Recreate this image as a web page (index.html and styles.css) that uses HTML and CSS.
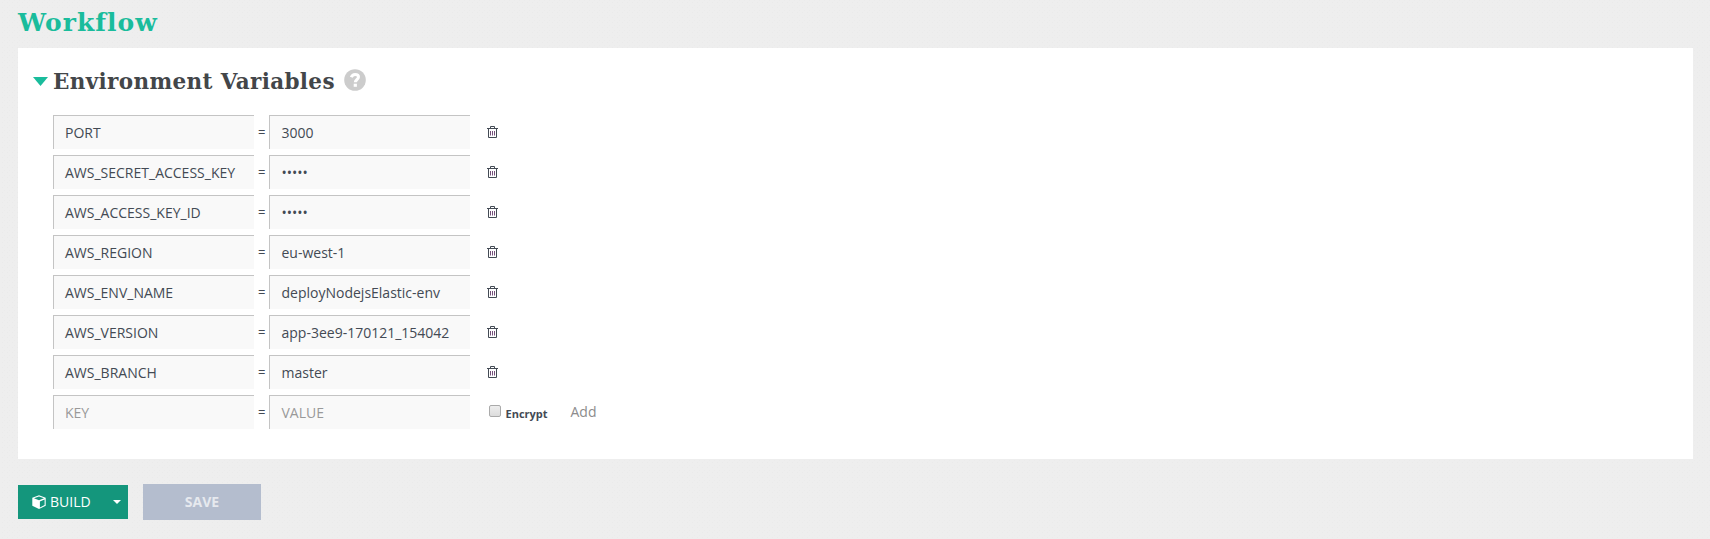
FILE: index.html
```html
<!DOCTYPE html>
<html lang="en">
<head>
<meta charset="utf-8">
<title>Workflow</title>
<link rel="stylesheet" href="styles.css">
</head>
<body>
<svg class="defs" width="0" height="0">
  <symbol id="trash" viewBox="0 0 11 12">
    <path d="M0 2.500h11M3.500 2V.5h4V2M1.500 3v8.500h8V3" fill="none" stroke="#434a54"/>
    <path d="M3.500 5v4.500M5.500 5v4.500M7.500 5v4.500" fill="none" stroke="#75507b"/>
  </symbol>
</svg>
<h1 class="title">Workflow</h1>
<main class="card">
  <h2 class="heading"><span class="toggle"></span><span class="heading-text">Environment Variables</span>
    <svg class="help" viewBox="0 0 22 22"><circle cx="11" cy="11" r="10.8" fill="#ccc"/><path d="M7.3 8.2C8 6.300 9.300 5.400 11.100 5.400C13.200 5.400 14.500 6.500 14.500 8.100C14.500 10.500 11.300 10.500 11.300 13.300" fill="none" stroke="#fff" stroke-width="3"/><path d="M9.700 14.700h3.200v3.100h-3.200z" fill="#fff"/></svg>
  </h2>
  <div class="rows">
    <div class="row"><div class="field">PORT</div><span class="eq">=</span><div class="field">3000</div><svg class="trash"><use href="#trash"/></svg></div>
    <div class="row"><div class="field">AWS_SECRET_ACCESS_KEY</div><span class="eq">=</span><div class="field">•••••</div><svg class="trash"><use href="#trash"/></svg></div>
    <div class="row"><div class="field">AWS_ACCESS_KEY_ID</div><span class="eq">=</span><div class="field">•••••</div><svg class="trash"><use href="#trash"/></svg></div>
    <div class="row"><div class="field">AWS_REGION</div><span class="eq">=</span><div class="field">eu-west-1</div><svg class="trash"><use href="#trash"/></svg></div>
    <div class="row"><div class="field">AWS_ENV_NAME</div><span class="eq">=</span><div class="field">deployNodejsElastic-env</div><svg class="trash"><use href="#trash"/></svg></div>
    <div class="row"><div class="field">AWS_VERSION</div><span class="eq">=</span><div class="field">app-3ee9-170121_154042</div><svg class="trash"><use href="#trash"/></svg></div>
    <div class="row"><div class="field">AWS_BRANCH</div><span class="eq">=</span><div class="field">master</div><svg class="trash"><use href="#trash"/></svg></div>
    <div class="row"><div class="field empty">KEY</div><span class="eq">=</span><div class="field empty">VALUE</div><span class="check"></span><span class="encrypt">Encrypt</span><span class="add">Add</span></div>
  </div>
</main>
<div class="actions">
  <div class="build">
    <svg class="cube" viewBox="0 0 14 14"><path d="M7 .2L13.700 2.700V10.800L7 13.900L.3 10.800V2.700z" fill="#fff"/><path d="M7 1.400L12 3.200L7 5.200L2 3.200zM7.900 6.400L12.600 4.400V10.100L7.900 12.400z" fill="#14967c"/></svg>
    <span class="build-text">BUILD</span><span class="caret"></span>
  </div>
  <div class="save">SAVE</div>
</div>
</body>
</html>
```
FILE: styles.css
```css
* { box-sizing: border-box; }
body {
  margin: 0;
  padding: 0 17px 0 18px;
  height: 539px;
  overflow: hidden;
  background-color: #eeeeee;
  background-image: radial-gradient(circle, #eaeaea 0.8px, transparent 1px), radial-gradient(circle, #ebebeb 0.8px, transparent 1px);
  background-size: 5px 5px, 5px 5px;
  background-position: 0 0, 2px 3px;
  font-family: "Open Sans", sans-serif;
  color: #434a54;
}
.defs { position: absolute; }
.title, .heading {
  margin: 0;
  font-family: "DejaVu Serif", serif;
  font-weight: bold;
  white-space: nowrap;
}
.title {
  height: 48px;
  line-height: 45px;
  font-size: 25px;
  letter-spacing: 1px;
  font-variant-ligatures: none;
  color: #1abc9c;
}
.card {
  height: 411px;
  padding: 16px 0 0 15px;
  background: #fff;
}
.heading {
  display: flex;
  align-items: center;
  height: 34px;
  font-size: 21.5px;
  line-height: 34px;
  color: #434649;
}
.toggle {
  width: 15px;
  height: 9px;
  margin: 1px 5px 0 0;
  background: #1abc9c;
  clip-path: polygon(0 0, 100% 0, 50% 100%);
}
.heading-text { width: 291px; padding-top: 1px; letter-spacing: 0.35px; }
.help { width: 22px; height: 22px; margin-top: -2px; }
.rows {
  display: flex;
  flex-direction: column;
  gap: 6px;
  padding: 17px 0 0 20px;
}
.row { display: flex; height: 34px; align-items: center; }
.field {
  width: 201px;
  height: 34px;
  padding-left: 11px;
  border-top: 1px solid #c4c4c4;
  border-left: 1px solid #c4c4c4;
  background: #f9f9f9;
  font-size: 14px;
  line-height: 34px;
  white-space: nowrap;
}
.eq + .field { padding-left: 11.5px; }
.empty { color: #999; }
.eq {
  width: 15px;
  padding-left: 4px;
  font-size: 13px;
  line-height: 32px;
}
.trash { width: 11px; height: 12px; margin: 0 0 0 17px; }
.check {
  width: 12px;
  height: 12px;
  margin: 0 0 2px 19px;
  border: 1px solid #aaa;
  border-radius: 2px;
  background: linear-gradient(#eee, #dcdcdc);
}
.encrypt { width: 65px; margin: 3px 0 0 4.5px; font-size: 11px; font-weight: bold; }
.add { margin-top: -1px; font-size: 14px; color: #8c8c8c; }
.actions { display: flex; align-items: center; gap: 15px; padding-top: 25px; }
.build {
  display: flex;
  align-items: center;
  width: 110px;
  height: 34px;
  padding-left: 14px;
  background: #14967c;
  color: #fff;
  font-size: 14px;
}
.cube { width: 14px; height: 14px; }
.build-text { width: 64px; margin-top: -1px; padding-left: 4px; }
.caret {
  width: 8px;
  height: 4px;
  margin-left: 3px;
  background: #fff;
  clip-path: polygon(0 0, 100% 0, 50% 100%);
}
.save {
  width: 118px;
  height: 36px;
  background: #b4bdce;
  color: #e6e9ee;
  font-size: 14px;
  font-weight: bold;
  line-height: 36px;
  text-align: center;
}
```
